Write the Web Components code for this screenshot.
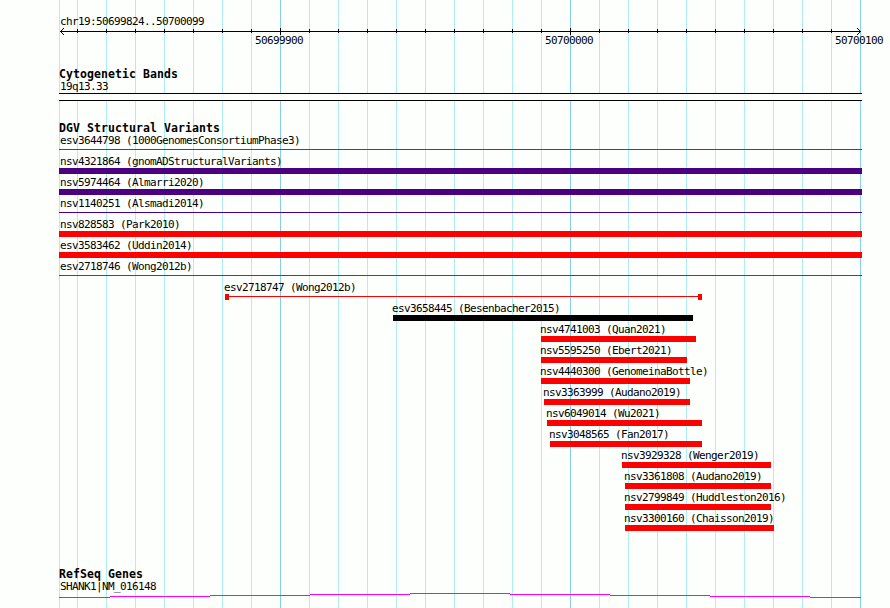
<!DOCTYPE html>
<html lang="en">
<head>
<meta charset="utf-8">
<title>chr19:50699824..50700099</title>
<style>
  body {
    margin: 0;
    background: #fdfffc;
    overflow: hidden;
  }
</style>
</head>
<body>
<genome-browser></genome-browser>

<script>
const features = [
  { name: 'esv3644798 (1000GenomesConsortiumPhase3)', start: 59, end: 862, color: 'red', type: 'line' },
  { name: 'nsv4321864 (gnomADStructuralVariants)', start: 59, end: 862, color: 'indigo' },
  { name: 'nsv5974464 (Almarri2020)', start: 59, end: 862, color: 'indigo' },
  { name: 'nsv1140251 (Alsmadi2014)', start: 59, end: 862, color: 'indigo', type: 'line' },
  { name: 'nsv828583 (Park2010)', start: 59, end: 862, color: 'red' },
  { name: 'esv3583462 (Uddin2014)', start: 59, end: 862, color: 'red' },
  { name: 'esv2718746 (Wong2012b)', start: 59, end: 862, color: 'red', type: 'line' },
  { name: 'esv2718747 (Wong2012b)', start: 225, end: 702, color: 'red', type: 'capped' },
  { name: 'esv3658445 (Besenbacher2015)', start: 393, end: 693, color: 'black' },
  { name: 'nsv4741003 (Quan2021)', start: 541, end: 696, color: 'red' },
  { name: 'nsv5595250 (Ebert2021)', start: 541, end: 687, color: 'red' },
  { name: 'nsv4440300 (GenomeinaBottle)', start: 541, end: 690, color: 'red' },
  { name: 'nsv3363999 (Audano2019)', start: 544, end: 690, color: 'red' },
  { name: 'nsv6049014 (Wu2021)', start: 547, end: 702, color: 'red' },
  { name: 'nsv3048565 (Fan2017)', start: 550, end: 702, color: 'red' },
  { name: 'nsv3929328 (Wenger2019)', start: 622, end: 771, color: 'red' },
  { name: 'nsv3361808 (Audano2019)', start: 625, end: 771, color: 'red' },
  { name: 'nsv2799849 (Huddleston2016)', start: 625, end: 771, color: 'red' },
  { name: 'nsv3300160 (Chaisson2019)', start: 625, end: 774, color: 'red' },
];

const panelLeft = 59;

class TrackLabel extends HTMLElement {
  constructor() {
    super();
    this.attachShadow({ mode: 'open' });
    this.shadowRoot.innerHTML = `
      <style>
        :host {
          display: block;
          height: 12px;
          font: 11px/14px "DejaVu Sans Mono", monospace;
          letter-spacing: -0.622px;
          white-space: nowrap;
          color: #000;
        }
        :host([heading]) {
          font: bold 11.5px/12px "DejaVu Sans Mono", monospace;
          letter-spacing: 0.077px;
        }
        :host([number]) {
          line-height: 12px;
        }
      </style>
      <slot></slot>`;
  }
}

class ScaleRuler extends HTMLElement {
  constructor() {
    super();
    this.attachShadow({ mode: 'open' });
    let ticks = '';
    for (let x = 77; x < 860; x += 29) {
      const major = (x - 280) % 290 === 0;
      ticks += major
        ? `<rect x="${x - panelLeft}" y="0" width="1" height="7"/>`
        : `<rect x="${x - panelLeft}" y="1" width="1" height="4"/>`;
    }
    this.shadowRoot.innerHTML = `
      <style>
        :host { display: block; }
        svg { display: block; margin-top: 1px; }
        .numbers {
          display: grid;
          grid-template-columns: 290px 290px 49px;
          margin-left: 196px;
        }
      </style>
      <track-label style="margin-left: 1px"><slot></slot></track-label>
      <svg width="803" height="7" shape-rendering="crispEdges">
        <rect x="1" y="3" width="801" height="1"/>
        ${ticks}
        <g class="heads">
          <path d="M1 3h1v1h-1zM2 2h1v1h-1zM3 1h1v1h-1zM4 0h1v1h-1zM2 4h1v1h-1zM3 5h1v1h-1zM4 6h1v1h-1z"/>
          <path d="M801 3h1v1h-1zM800 2h1v1h-1zM799 1h1v1h-1zM798 0h1v1h-1zM800 4h1v1h-1zM799 5h1v1h-1zM798 6h1v1h-1z"/>
        </g>
      </svg>
      <div class="numbers">
        <track-label number>50699900</track-label>
        <track-label number>50700000</track-label>
        <track-label number>50700100</track-label>
      </div>`;
  }
}

class CytoBand extends HTMLElement {
  constructor() {
    super();
    this.attachShadow({ mode: 'open' });
    this.shadowRoot.innerHTML = `
      <style>
        :host { display: block; }
        track-label { margin-left: 1px; }
        .band {
          box-sizing: border-box;
          height: 8px;
          margin-top: 1px;
          border: solid #000;
          border-width: 1px 0;
          background: #fdfffc;
        }
      </style>
      <track-label><slot></slot></track-label>
      <div class="band"></div>`;
  }
}

class VariantFeature extends HTMLElement {
  constructor() {
    super();
    this.attachShadow({ mode: 'open' });
    this.shadowRoot.innerHTML = `
      <style>
        :host {
          display: block;
          height: 21px;
          margin-left: var(--offset);
        }
        track-label { margin: 0 0 1px var(--label-shift); }
        .glyph {
          box-sizing: border-box;
          width: var(--length);
          height: 6px;
          background: var(--color);
        }
        :host([type="line"]) .glyph,
        :host([type="capped"]) .glyph {
          background: linear-gradient(var(--color), var(--color)) 0 2px / 100% 1px no-repeat;
        }
        :host([type="capped"]) .glyph {
          border: solid var(--color);
          border-width: 0 4px;
        }
      </style>
      <track-label><slot></slot></track-label>
      <div class="glyph"></div>`;
  }
}

class VariantTrack extends HTMLElement {
  constructor() {
    super();
    this.attachShadow({ mode: 'open' });
    this.shadowRoot.innerHTML = '<style>:host { display: flex; flex-direction: column; }</style>';
    features.forEach((feature) => {
      const row = document.createElement('variant-feature');
      row.textContent = feature.name;
      row.setAttribute('type', feature.type || 'box');
      row.style.setProperty('--offset', `${feature.start - panelLeft}px`);
      row.style.setProperty('--length', `${feature.end - feature.start}px`);
      row.style.setProperty('--label-shift', feature.start === panelLeft ? '1px' : '-1px');
      row.style.setProperty('--color', feature.color);
      this.shadowRoot.appendChild(row);
    });
  }
}

class GeneTrack extends HTMLElement {
  constructor() {
    super();
    this.attachShadow({ mode: 'open' });
    this.shadowRoot.innerHTML = `
      <style>
        :host { display: block; }
        track-label { margin-left: 1px; }
        svg { display: block; margin-top: 1px; }
      </style>
      <track-label><slot></slot></track-label>
      <svg width="803" height="5" fill="none" stroke="#f0f" shape-rendering="crispEdges">
        <path d="M0 4.5H51M51 3.5H151M151 2.5H251M251 1.5H351M351 .5H451M451 1.5H551M551 2.5H651M651 3.5H751M751 4.5H802"/>
      </svg>`;
  }
}

// vertical guide lines that run behind every track
class GridLines extends HTMLElement {
  constructor() {
    super();
    this.attachShadow({ mode: 'open' });
    let lines = '<rect x="59" width="1" height="608" fill="#afeeee"/>';
    for (let x = 77; x <= 860; x += 29) {
      const color = (x - 280) % 290 === 0 ? '#87ceeb' : '#afeeee';
      lines += `<rect x="${x}" width="1" height="608" fill="${color}"/>`;
    }
    this.shadowRoot.innerHTML = `
      <style>
        :host {
          position: absolute;
          inset: 0;
          z-index: -1;
        }
        svg { display: block; }
      </style>
      <svg width="890" height="608" shape-rendering="crispEdges">${lines}</svg>`;
  }
}

class GenomeBrowser extends HTMLElement {
  constructor() {
    super();
    this.attachShadow({ mode: 'open' });
    this.shadowRoot.innerHTML = `
      <style>
        :host {
          display: flex;
          flex-direction: column;
          position: relative;
          z-index: 0;
          box-sizing: border-box;
          width: 890px;
          height: 608px;
          padding: 15px 28px 0 59px;
          background: #fdfffc;
        }
        scale-ruler { height: 53px; }
        cyto-band { height: 42px; }
        variant-track { height: 434px; }
      </style>
      <grid-lines></grid-lines>
      <scale-ruler>chr19:50699824..50700099</scale-ruler>
      <track-label heading>Cytogenetic Bands</track-label>
      <cyto-band>19q13.33</cyto-band>
      <track-label heading>DGV Structural Variants</track-label>
      <variant-track></variant-track>
      <track-label heading>RefSeq Genes</track-label>
      <gene-track>SHANK1|NM_016148</gene-track>`;
  }
}

customElements.define('track-label', TrackLabel);
customElements.define('scale-ruler', ScaleRuler);
customElements.define('cyto-band', CytoBand);
customElements.define('variant-feature', VariantFeature);
customElements.define('variant-track', VariantTrack);
customElements.define('gene-track', GeneTrack);
customElements.define('grid-lines', GridLines);
customElements.define('genome-browser', GenomeBrowser);
</script>
</body>
</html>
